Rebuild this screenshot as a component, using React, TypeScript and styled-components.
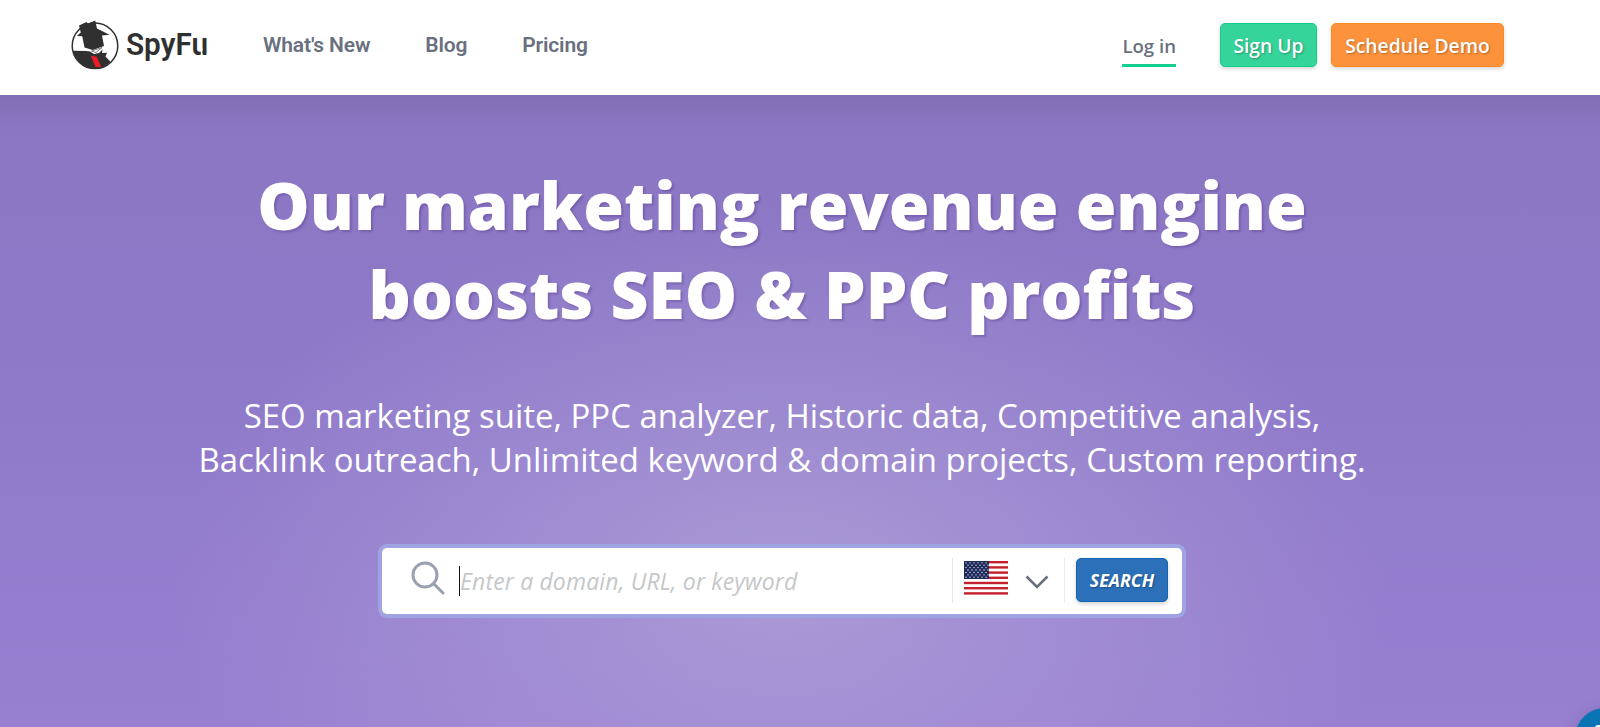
import styled, { createGlobalStyle } from "styled-components"

const GlobalStyle = createGlobalStyle`
    * {
        box-sizing: border-box;
    }

    body {
        margin: 0;
        overflow: hidden;
        font-family: 'Open Sans', sans-serif;
    }
`

const Page = styled.div`
    display: flex;
    flex-direction: column;
    height: 727px;
    overflow: hidden;
`

const Header = styled.header`
    display: flex;
    align-items: flex-start;
    flex: none;
    height: 95px;
    padding: 0 96px 0 71px;
    background: #ffffff;
`

const Logo = styled.svg`
    flex: none;
    width: 140px;
    height: 56px;
    margin-top: 18px;
`

const Nav = styled.nav`
    display: flex;
    gap: 55px;
    margin: 31px 0 0 52px;
`

const NavLink = styled.a`
    font-family: Roboto, sans-serif;
    font-weight: 600;
    font-size: 21px;
    letter-spacing: -0.15px;
    line-height: 28px;
    color: #697080;
    white-space: nowrap;
`

const Actions = styled.div`
    display: flex;
    margin-left: auto;
    margin-top: 23px;
`

const LoginLink = styled.a`
    height: 44px;
    margin-right: 44px;
    padding-top: 9px;
    font-weight: 600;
    font-size: 18.6px;
    line-height: 28px;
    color: #697080;
    border-bottom: 3px solid #15ce91;
    white-space: nowrap;
`

const ActionButton = styled.button<{ $tone: "green" | "orange"; $width: number }>`
    width: ${({ $width }) => $width}px;
    height: 44px;
    padding: 0;
    margin-right: ${({ $tone }) => ($tone === "green" ? 14 : 0)}px;
    font-family: 'Open Sans', sans-serif;
    font-weight: 600;
    font-size: 19.3px;
    color: #ffffff;
    text-shadow: 1px 1px 2px rgba(0, 0, 0, 0.3);
    background: ${({ $tone }) => ($tone === "green" ? "#35d49a" : "#fc933c")};
    border: 1px solid ${({ $tone }) => ($tone === "green" ? "#10cd8b" : "#fb8a1e")};
    border-radius: 5px;
    box-shadow: 0 2px 4px rgba(0, 0, 0, 0.16);
    white-space: nowrap;
`

const Hero = styled.main`
    position: relative;
    display: flex;
    flex-direction: column;
    align-items: center;
    flex: 1;
    padding-right: 36px;
    background:
        linear-gradient(rgba(60, 50, 80, 0.13), rgba(60, 50, 80, 0) 32px),
        radial-gradient(ellipse 610px 380px at 782px 490px, rgba(190, 178, 222, 0.52), rgba(170, 152, 216, 0) 100%),
        linear-gradient(#8a76c2, #8f7aca 50%, #9880d1);
`

const Title = styled.h1`
    margin: 66px 0 0;
    font-weight: 800;
    font-size: 65.9px;
    line-height: 88.5px;
    color: #ffffff;
    text-align: center;
    text-shadow: 2px 2px 2px rgba(70, 40, 120, 0.28);
    white-space: nowrap;
`

const Subtitle = styled.p`
    margin: 56px 0 0;
    font-size: 32.95px;
    line-height: 44px;
    color: #ffffff;
    text-align: center;
    white-space: nowrap;
`

const SearchBar = styled.form`
    display: flex;
    align-items: center;
    width: 800px;
    height: 66px;
    margin-top: 66px;
    padding: 0 14px 0 29px;
    background: #ffffff;
    border-radius: 5px;
    box-shadow: 0 0 0 4px #9fa3e1;
`

const SearchIcon = styled.svg`
    flex: none;
    width: 34px;
    height: 34px;
    margin-bottom: 7px;
`

const Caret = styled.span`
    flex: none;
    width: 1px;
    height: 30px;
    margin: 0 0 0 14px;
    background: #111111;
`

const SearchInput = styled.input`
    flex: 1;
    min-width: 0;
    height: 40px;
    padding: 0;
    border: 0;
    outline: 0;
    background: transparent;
    font-family: 'Open Sans', sans-serif;
    font-style: italic;
    font-size: 23px;
    letter-spacing: 0.15px;

    &::placeholder {
        color: #c5c7c9;
        opacity: 1;
    }
`

const Country = styled.div`
    display: flex;
    flex: none;
    width: 113px;
    height: 45px;
    margin-bottom: 2px;
    padding-left: 11px;
    border-left: 1px solid #e8e8ea;
    border-right: 1px solid #ececef;
`

const Flag = styled.svg`
    width: 44px;
    height: 34px;
    margin-top: 3px;
`

const Chevron = styled.svg`
    width: 24px;
    height: 14px;
    margin: 17px 0 0 17px;
`

const SearchButton = styled.button`
    flex: none;
    width: 92px;
    height: 44px;
    margin-left: 11px;
    margin-bottom: 2px;
    padding: 0 0 1px;
    font-family: 'Open Sans', sans-serif;
    font-style: italic;
    font-weight: 700;
    font-size: 17.8px;
    color: #ffffff;
    text-shadow: 1px 1px 2px rgba(0, 0, 0, 0.3);
    background: #2b70b9;
    border: 1px solid #1266b3;
    border-radius: 5px;
    box-shadow: 0 2px 4px rgba(0, 0, 0, 0.18);
`

const ChatBubble = styled.div`
    position: absolute;
    left: 1575px;
    top: 613px;
    width: 60px;
    height: 60px;
    padding: 17px 20px;
    border-radius: 50%;
    background: #0b74b5;
    box-shadow: 0 1px 16px rgba(0, 0, 0, 0.15);
`

const ChatGlyph = styled.div`
    width: 20px;
    height: 22px;
    border-radius: 3px;
    background: #ffffff;
`

const navItems = ["What's New", "Blog", "Pricing"]
const stripes = [0, 1, 2, 3, 4, 5, 6]
const starRows = [0, 1, 2, 3, 4, 5, 6]

const SpyFuLogo = () => (
    <Logo viewBox="0 0 140 56" aria-label="SpyFu">
        <circle cx="24" cy="27.8" r="22.8" fill="#fff" stroke="#303030" strokeWidth="1.5" />
        <path d="M8 7.5 L15.5 4 L17 5.5 L24.2 2.4 L26 10.5 L38.5 16.7 L31 17.5 L33 28 L21.7 32 L13.5 29.5 L11.2 18.2 L5.8 18 L9.8 14.5 Z" fill="#303030" />
        <path d="M2 32.8 L15 33 L19 33.5 L23 36 L28 35 L31.5 31.5 L31 35 L36 34.7 L34.5 38.5 L39.5 43.8 C35 48 30.5 50.4 24 50.6 C12.5 50.2 4.5 43 2 32.8 Z" fill="#303030" />
        <path d="M20.5 33 L31 29.6 L25 34.5 Z" fill="#fff" stroke="#303030" strokeWidth="0.6" />
        <path d="M19.7 37.7 L25.7 38.7 L30.3 49 L24.6 49 Z" fill="#ee1c25" />
        <text
            x="55"
            y="36.5"
            textLength="82"
            lengthAdjust="spacingAndGlyphs"
            fontFamily="Roboto, sans-serif"
            fontWeight="600"
            fontSize="31"
            fill="#303030"
        >
            SpyFu
        </text>
        {/* stencil cut in the last letter */}
        <rect x="129.8" y="30" width="1.6" height="8" fill="#fff" />
    </Logo>
)

const UsFlag = () => (
    <Flag viewBox="0 0 44 34">
        <rect width="44" height="34" fill="#fff" />
        {stripes.map((i) => (
            <rect key={i} y={i * 5.2} width="44" height="2.4" fill="#c4202f" />
        ))}
        <rect width="25" height="18" fill="#1f2a5c" />
        {starRows.map((row) =>
            [0, 1, 2, 3, 4, 5].map((col) => (
                <circle key={`${row}-${col}`} cx={2 + col * 4 + (row % 2) * 2} cy={1.8 + row * 2.4} r="0.65" fill="#fff" />
            ))
        )}
    </Flag>
)

export default function App() {
    return (
        <Page>
            <GlobalStyle />
            <Header>
                <SpyFuLogo />
                <Nav>
                    {navItems.map((item) => (
                        <NavLink key={item}>{item}</NavLink>
                    ))}
                </Nav>
                <Actions>
                    <LoginLink>Log in</LoginLink>
                    <ActionButton $tone="green" $width={97}>Sign Up</ActionButton>
                    <ActionButton $tone="orange" $width={173}>Schedule Demo</ActionButton>
                </Actions>
            </Header>
            <Hero>
                <Title>
                    Our marketing revenue engine
                    <br />
                    boosts SEO &amp; PPC profits
                </Title>
                <Subtitle>
                    SEO marketing suite, PPC analyzer, Historic data, Competitive analysis,
                    <br />
                    Backlink outreach, Unlimited keyword &amp; domain projects, Custom reporting.
                </Subtitle>
                <SearchBar>
                    <SearchIcon viewBox="0 0 34 34" fill="none" stroke="#99a1b0" strokeWidth="3">
                        <circle cx="14" cy="14" r="12" />
                        <path d="M22.5 22.5 L32 32" strokeLinecap="round" />
                    </SearchIcon>
                    <Caret />
                    <SearchInput placeholder="Enter a domain, URL, or keyword" />
                    <Country>
                        <UsFlag />
                        <Chevron viewBox="0 0 24 14" fill="none" stroke="#697080" strokeWidth="2.6">
                            <path d="M1.5 1.5 L12 12 L22.5 1.5" />
                        </Chevron>
                    </Country>
                    <SearchButton type="button">SEARCH</SearchButton>
                </SearchBar>
                <ChatBubble>
                    <ChatGlyph />
                </ChatBubble>
            </Hero>
        </Page>
    )
}
